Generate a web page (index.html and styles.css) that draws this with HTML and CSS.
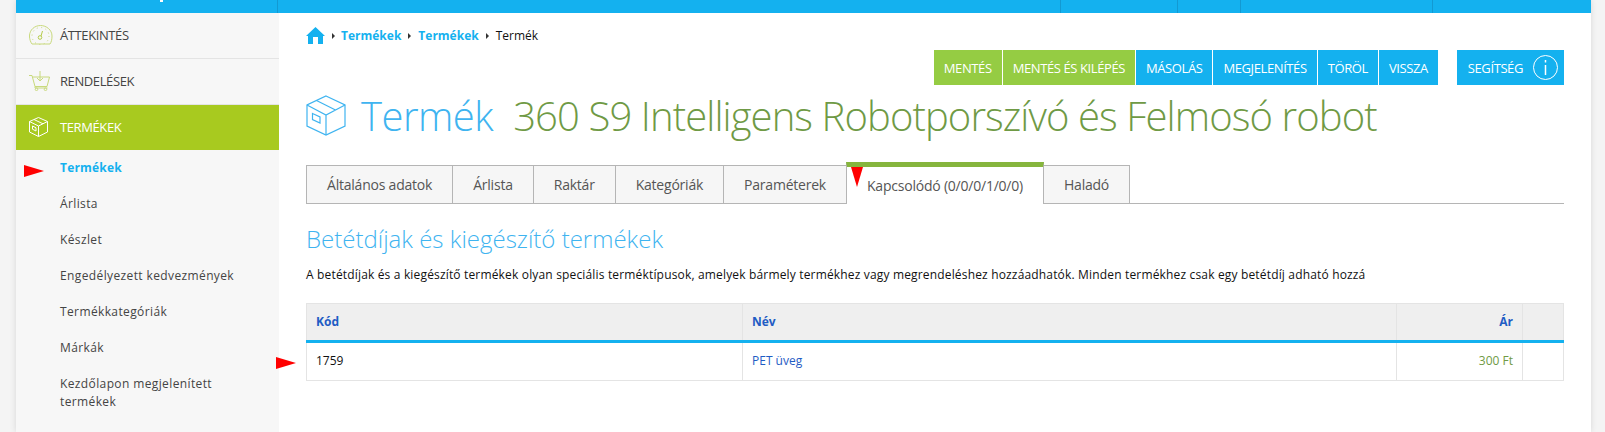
FILE: index.html
```html
<!DOCTYPE html>
<html>
<head>
<meta charset="utf-8">
<title>Termék</title>
<link rel="stylesheet" href="styles.css">
</head>
<body>
<div class="page">
	<div class="topbar">
		<div class="topcell logo"><span class="logoMark"></span></div>
		<div class="topcell c2"></div>
		<div class="topcell c3"></div>
		<div class="topcell c4"></div>
		<div class="topcell c5"></div>
		<div class="topcell c6"></div>
	</div>
	<div class="main">
		<div class="sidebar">
			<a class="menu">
				<svg class="menuIcon" width="24" height="20" viewBox="0 0 24 20" fill="none" stroke="#c8d97c" stroke-width="1">
					<path d="M3 19C1.500 17 .5 14 .5 11C.5 5 5.500 .5 11.500 .5C17.500 .5 23 5 23 11C23 14 22.500 17 21 19Z"/>
					<circle cx="11.500" cy="11" r="8.500" stroke-dasharray="1 3.500"/>
					<circle cx="11" cy="12.500" r="1.800" stroke="#b5cc4a"/>
					<path d="M12 11L13.500 6" stroke="#b5cc4a"/>
				</svg>
				<span>ÁTTEKINTÉS</span>
			</a>
			<a class="menu">
				<svg class="menuIcon" width="24" height="20" viewBox="0 0 24 20" fill="none" stroke="#c8d97c" stroke-width="1">
					<path d="M0 4.500H3L6 15.500H18L20.500 6H3.500"/>
					<path d="M11 0V10M8 7L11 10L14 7"/>
					<path d="M6 15.500V17H18.500"/>
					<circle cx="7.500" cy="18.300" r="1.300"/>
					<circle cx="16.500" cy="18.300" r="1.300"/>
				</svg>
				<span>RENDELÉSEK</span>
			</a>
			<a class="menu active">
				<svg class="menuIcon" width="24" height="20" viewBox="0 0 24 20" fill="none" stroke="#fff" stroke-width="1">
					<path d="M9.500 .5L18.500 4.500V15L9.500 19.500L.5 15V4.500Z"/>
					<path d="M.5 4.500L9.500 9L18.500 4.500M9.500 9V19.500M5 2.500L14 6.800"/>
					<path d="M3.500 9L7 10.800V14L3.500 12.200Z"/>
				</svg>
				<span>TERMÉKEK</span>
			</a>
			<ul class="submenu">
				<li class="current">Termékek</li>
				<li>Árlista</li>
				<li>Készlet</li>
				<li>Engedélyezett kedvezmények</li>
				<li>Termékkategóriák</li>
				<li>Márkák</li>
				<li>Kezdőlapon megjelenített termékek</li>
			</ul>
			<div class="arrow arrowSide"></div>
		</div>
		<div class="content">
			<div class="breadcrumb">
				<svg class="home" width="19" height="17" viewBox="0 0 19 17"><path fill="#14b1ef" d="M9.500 0L19 9H17V17H12V10H7V17H2V9H0Z"/></svg>
				<span class="sep"></span><a>Termékek</a>
				<span class="sep"></span><a>Termékek</a>
				<span class="sep"></span><span>Termék</span>
			</div>
			<div class="buttons">
				<a class="btn green">MENTÉS</a>
				<a class="btn green">MENTÉS ÉS KILÉPÉS</a>
				<a class="btn">MÁSOLÁS</a>
				<a class="btn">MEGJELENÍTÉS</a>
				<a class="btn">TÖRÖL</a>
				<a class="btn">VISSZA</a>
				<a class="btn help">SEGÍTSÉG
					<svg width="25" height="25" viewBox="0 0 25 25" fill="none" stroke="#fff"><circle cx="12.500" cy="12.500" r="12"/><path d="M12.500 10V20" stroke-width="1.500"/><path d="M12.500 5V7.500" stroke-width="1.500"/></svg>
				</a>
			</div>
			<h1 class="title">
				<svg width="40" height="41" viewBox="0 0 40 41" fill="none" stroke="#3fb4f0" stroke-width="1.200">
					<path d="M20 1L39 10V31L20 40L1 31V10Z"/>
					<path d="M1 10L20 20L39 10M20 20V40M10.500 5.500L29.500 15"/>
					<path d="M6.500 18.500L14 22V28L6.500 24.500Z"/>
				</svg>
				<span class="titleLabel">Termék</span>
				<span class="titleName">360 S9 Intelligens Robotporszívó és Felmosó robot</span>
			</h1>
			<div class="tabs">
				<a class="tab">Általános adatok</a>
				<a class="tab">Árlista</a>
				<a class="tab">Raktár</a>
				<a class="tab">Kategóriák</a>
				<a class="tab">Paraméterek</a>
				<a class="tab activeTab">Kapcsolódó (0/0/0/1/0/0)<span class="arrow arrowTab"></span></a>
				<a class="tab">Haladó</a>
			</div>
			<h2 class="sectionTitle">Betétdíjak és kiegészítő termékek</h2>
			<p class="intro">A betétdíjak és a kiegészítő termékek olyan speciális terméktípusok, amelyek bármely termékhez vagy megrendeléshez hozzáadhatók. Minden termékhez csak egy betétdíj adható hozzá</p>
			<table class="list">
				<thead>
					<tr><th class="colCode">Kód</th><th class="colName">Név</th><th class="colPrice">Ár</th><th class="colEnd"></th></tr>
				</thead>
				<tbody>
					<tr><td>1759</td><td><a>PET üveg</a></td><td class="price">300 Ft</td><td></td></tr>
				</tbody>
			</table>
			<div class="arrow arrowRow"></div>
		</div>
	</div>
</div>
</body>
</html>
```

FILE: styles.css
```css
html,body{
	margin:0;
	padding:0;
	height:432px;
	overflow:hidden;
	background-color:#f4f4f4;
	font-family:"Open Sans",sans-serif;
	font-size:12px;
	color:#111;
}
a{
	text-decoration:none;
}
.page{
	width:1575px;
	height:432px;
	margin-left:16px;
	background-color:#fff;
	box-shadow:0 0 6px rgba(0,0,0,0.12);
	overflow:hidden;
	position:relative;
}
.topbar{
	display:flex;
	height:13px;
	background-color:#14b1ef;
}
.topcell{
	height:13px;
	border-right:1px solid #1399d2;
}
.logo{
	width:261px;
	position:relative;
}
.logoMark{
	position:absolute;
	left:144px;
	top:0;
	width:3px;
	height:2px;
	background-color:#fff;
}
.c2{width:782px;}
.c3{width:116px;}
.c4{width:62px;}
.c5{width:191px;}
.c6{flex:1;border-right:none;}
.main{
	display:flex;
}
.sidebar{
	width:263px;
	height:419px;
	background-color:#f7f7f7;
	position:relative;
	flex:none;
}
.menu{
	display:flex;
	align-items:center;
	height:43px;
	padding:0 0 2px 13px;
	border-bottom:1px solid #e4e4e4;
	color:#444;
	font-size:13px;
	letter-spacing:-0.4px;
}
.menuIcon{
	flex:none;
}
.menu span{
	margin-left:7px;
}
.menu.active{
	background-color:#a8ca1f;
	color:#fff;
	border-bottom:none;
}
.submenu{
	list-style:none;
	margin:0;
	padding:0 0 0 44px;
}
.submenu li{
	width:190px;
	padding:9px 0;
	line-height:18px;
	color:#444;
	font-size:12px;
	letter-spacing:0.38px;
}
.submenu li.current{
	color:#14b1ef;
	font-weight:700;
	letter-spacing:0.2px;
}
.arrow{
	position:absolute;
	width:0;
	height:0;
}
.arrowSide,.arrowRow{
	border-top:6px solid transparent;
	border-bottom:6px solid transparent;
	border-left:20px solid #f00;
}
.arrowSide{
	left:8px;
	top:152px;
}
.arrowRow{
	left:-3px;
	top:344px;
}
.content{
	flex:1;
	padding:0 27px;
	position:relative;
}
.breadcrumb{
	display:flex;
	align-items:center;
	height:19px;
	margin-top:13px;
	font-size:12px;
}
.breadcrumb a{
	color:#14b1ef;
	font-weight:700;
}
.home{
	margin-right:7px;
}
.sep{
	width:0;
	height:0;
	margin-right:6px;
	border-top:3px solid transparent;
	border-bottom:3px solid transparent;
	border-left:3px solid #333;
}
.breadcrumb a + .sep{
	margin-left:7px;
	margin-right:7px;
}
.buttons{
	display:flex;
	justify-content:flex-end;
	gap:1px;
	margin-top:5px;
}
.btn{
	display:flex;
	align-items:center;
	height:35px;
	padding:0 10px;
	background-color:#14b1ef;
	color:#fff;
	font-size:13px;
	letter-spacing:-0.4px;
}
.btn.green{
	background-color:#95cc43;
}
.btn.help{
	margin-left:18px;
	padding:0 6px 0 11px;
	gap:10px;
}
.title{
	display:flex;
	align-items:center;
	margin:2px 0 0;
	height:56px;
	font-size:40px;
	font-weight:300;
	white-space:nowrap;
}
.titleLabel{
	margin-left:15px;
	color:#3fb4f0;
	letter-spacing:-0.5px;
}
.titleName{
	margin-left:20px;
	color:#6f9a45;
	letter-spacing:-0.9px;
}
.tabs{
	display:flex;
	height:38px;
	margin-top:22px;
	border-bottom:1px solid #b5b5b5;
}
.tab{
	display:flex;
	align-items:center;
	height:37px;
	padding:0 20px;
	background-color:#f6f6f6;
	border:1px solid #b5b5b5;
	border-left:none;
	color:#555;
	font-size:14px;
	letter-spacing:-0.22px;
}
.tab:first-child{
	border-left:1px solid #b5b5b5;
}
.activeTab{
	position:relative;
	background-color:#fff;
	height:36px;
	padding-bottom:1px;
	margin:-3px 0 0 -1px;
	border-left:1px solid #b5b5b5;
	border-top:5px solid #86b53d;
	border-bottom:none;
}
.arrowTab{
	left:4px;
	top:0;
	border-left:6px solid transparent;
	border-right:6px solid transparent;
	border-top:20px solid #f00;
}
.sectionTitle{
	margin:18px 0 0;
	font-size:24px;
	font-weight:300;
	line-height:33px;
	color:#3fb4f0;
}
.intro{
	margin:11px 0 0;
	font-size:12px;
	line-height:18px;
	letter-spacing:0.165px;
	color:#111;
	white-space:nowrap;
}
.list{
	width:100%;
	margin-top:19px;
	border-collapse:collapse;
	table-layout:fixed;
	font-size:12px;
}
.list th{
	height:34px;
	padding:0 9px 2px;
	background-color:#efefef;
	border:1px solid #e4e4e4;
	border-bottom:3px solid #14b1ef;
	color:#1f5cc4;
	font-weight:700;
	text-align:left;
}
.list td{
	height:35px;
	padding:0 9px 2px;
	border:1px solid #e4e4e4;
}
.list td a{
	color:#1f5cc4;
}
.colCode{width:417px;}
.colName{width:635px;}
.list .colPrice{width:107px;text-align:right;}
.price{
	text-align:right;
	color:#6f9a45;
}
```
